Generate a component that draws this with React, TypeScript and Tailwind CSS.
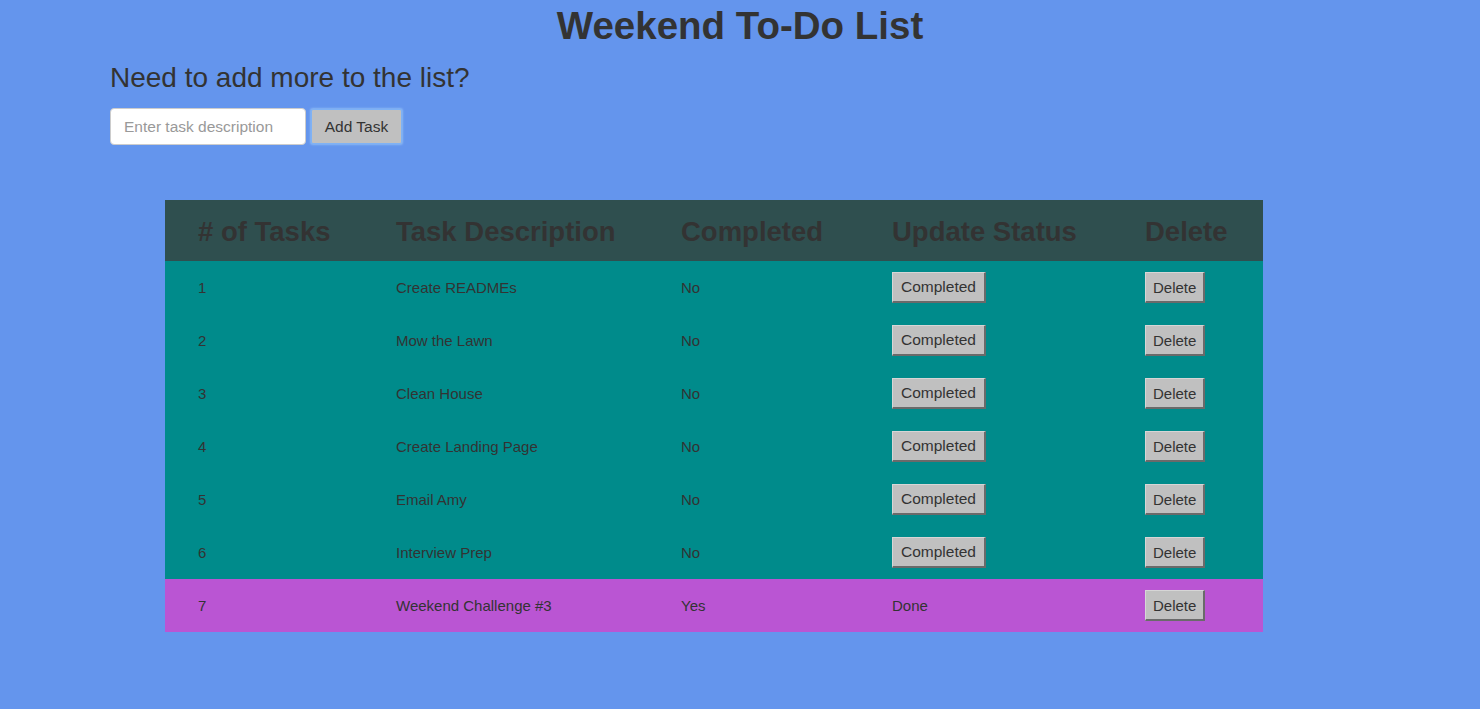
import React from "react";

const tasks = [
  { id: 1, desc: "Create READMEs", done: false },
  { id: 2, desc: "Mow the Lawn", done: false },
  { id: 3, desc: "Clean House", done: false },
  { id: 4, desc: "Create Landing Page", done: false },
  { id: 5, desc: "Email Amy", done: false },
  { id: 6, desc: "Interview Prep", done: false },
  { id: 7, desc: "Weekend Challenge #3", done: true },
];

function GrayButton({ children, narrow }: { children: React.ReactNode; narrow?: boolean }) {
  return (
    <button
      className={`h-[31px] ${narrow ? "px-[7px] text-[15px]" : "px-[8px] text-[15.5px]"} bg-[#c0c0c0] text-[#333] border-t border-l border-t-[#d6d6d6] border-l-[#d6d6d6] border-b-2 border-r-2 border-b-[#6a6a6a] border-r-[#6a6a6a] leading-none`}
    >
      {children}
    </button>
  );
}

export default function App() {
  return (
    <div
      className="min-h-[709px] w-full bg-[#6495ed] text-[#333]"
      style={{ fontFamily: '"Liberation Sans", Arial, Helvetica, sans-serif' }}
    >
      <h1 className="text-center text-[38.5px] font-bold leading-[52px] pt-0">Weekend To-Do List</h1>
      <div className="pl-[110px]">
        <h2 className="text-[28px] leading-[52px] mt-0">Need to add more to the list?</h2>
        <div className="flex items-center gap-[5px] mt-[4px]">
          <input
            className="w-[196px] h-[37px] rounded-[4px] bg-white border border-[#cccccc] px-[13px] text-[15.5px] placeholder:text-[#999] outline-none"
            placeholder="Enter task description"
          />
          <button className="w-[91px] h-[35px] bg-[#c0c0c0] text-[15.5px] text-[#333] border border-[#7fb2f5] rounded-[2px] shadow-[0_0_2px_1px_#8ab8f5]">
            Add Task
          </button>
        </div>
      </div>
      <div className="pl-[165px] pt-[55px]">
        <table className="w-[1098px] border-collapse table-fixed">
          <colgroup>
            <col className="w-[198px]" />
            <col className="w-[285px]" />
            <col className="w-[211px]" />
            <col className="w-[253px]" />
            <col className="w-[151px]" />
          </colgroup>
          <thead>
            <tr className="bg-[#2f4f4f] h-[61px]">
              {["# of Tasks", "Task Description", "Completed", "Update Status", "Delete"].map((h) => (
                <th key={h} className="text-left pl-[33px] text-[27.5px] font-bold text-[#333] whitespace-nowrap pt-[2px]">
                  {h}
                </th>
              ))}
            </tr>
          </thead>
          <tbody>
            {tasks.map((t) => (
              <tr key={t.id} className={`h-[53px] text-[15px] ${t.done ? "bg-[#ba55d3]" : "bg-[#008b8b]"}`}>
                <td className="pl-[33px] pt-[2px]">{t.id}</td>
                <td className="pl-[33px] pt-[2px]">{t.desc}</td>
                <td className="pl-[33px] pt-[2px]">{t.done ? "Yes" : "No"}</td>
                {t.done ? (
                  <td className="pl-[33px] pt-[2px]">Done</td>
                ) : (
                  <td className="pl-[33px]">
                    <GrayButton>Completed</GrayButton>
                  </td>
                )}
                <td className="pl-[33px]">
                  <GrayButton narrow>Delete</GrayButton>
                </td>
              </tr>
            ))}
          </tbody>
        </table>
      </div>
    </div>
  );
}
